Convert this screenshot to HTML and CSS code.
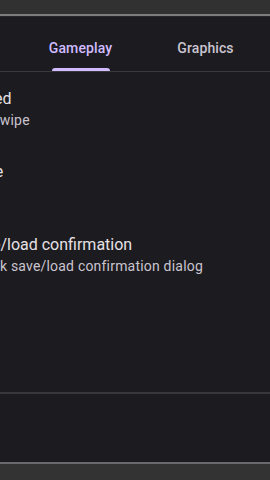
FILE: index.html
```html
<!DOCTYPE html>
<html>
<head>
<meta charset="utf-8">
<link rel="stylesheet" href="styles.css">
</head>
<body>
<div class="screen">
  <div class="topbar"></div>
  <div class="edge"></div>
  <div class="panel">
    <div class="tabs">
      <div class="tab">General</div>
      <div class="tab active"><span class="tab-label">Gameplay</span><span class="indicator"></span></div>
      <div class="tab">Graphics</div>
    </div>
    <div class="list">
      <div class="item">
        <div class="title">Pad locked</div>
        <div class="subtitle">Menu on swipe</div>
      </div>
      <div class="item">
        <div class="title">Auto save</div>
        <div class="subtitle">Enabled</div>
      </div>
      <div class="item">
        <div class="title">Skip save/load confirmation</div>
        <div class="subtitle">Will not ask save/load confirmation dialog</div>
      </div>
    </div>
    <div class="footer"></div>
  </div>
  <div class="edge bottom-edge"></div>
  <div class="bottombar"></div>
</div>
</body>
</html>
```

FILE: styles.css
```css
html, body {
  margin: 0;
  padding: 0;
}
body {
  background: #323232;
  font-family: Roboto, "Noto Sans", sans-serif;
  overflow: hidden;
}
.screen {
  width: 270px;
  height: 480px;
  display: flex;
  flex-direction: column;
  overflow: hidden;
}
.topbar {
  height: 14px;
  background: #313131;
  flex: none;
}
.edge {
  height: 2px;
  background: #7d7d7f;
  border-bottom: 1px solid #26252a;
  flex: none;
}
.panel {
  flex: none;
  height: 445px;
  background: #1c1b1f;
  display: flex;
  flex-direction: column;
  overflow: hidden;
}
.tabs {
  margin-top: 7px;
  height: 47px;
  display: flex;
  margin-left: -107px;
  border-bottom: 1px solid #39383d;
  flex: none;
}
.tab {
  flex: none;
  width: 125px;
  display: flex;
  flex-direction: column;
  align-items: center;
  justify-content: center;
  position: relative;
  font-size: 14px;
  font-weight: 500;
  color: #cac4d0;
  letter-spacing: 0.1px;
}
.tab.active {
  color: #d0bcff;
}
.indicator {
  position: absolute;
  bottom: 0;
  left: 50%;
  width: 58px;
  margin-left: -29px;
  height: 3px;
  border-radius: 3px 3px 0 0;
  background: #d0bcff;
}
.list {
  flex: 1;
  margin-left: -67px;
  display: flex;
  flex-direction: column;
}
.item {
  height: 73px;
  box-sizing: border-box;
  padding-top: 16px;
  white-space: nowrap;
}
.title {
  font-size: 16px;
  line-height: 22px;
  color: #e6e1e5;
}
.subtitle {
  font-size: 14px;
  line-height: 20px;
  color: #cac4d0;
  letter-spacing: 0.2px;
}
.footer {
  flex: none;
  height: 68px;
  border-top: 2px solid #38373c;
}
.bottom-edge {
  background: #6a6a6c;
  border-bottom: none;
}
.bottombar {
  flex: 1;
  background: #333333;
}
```
